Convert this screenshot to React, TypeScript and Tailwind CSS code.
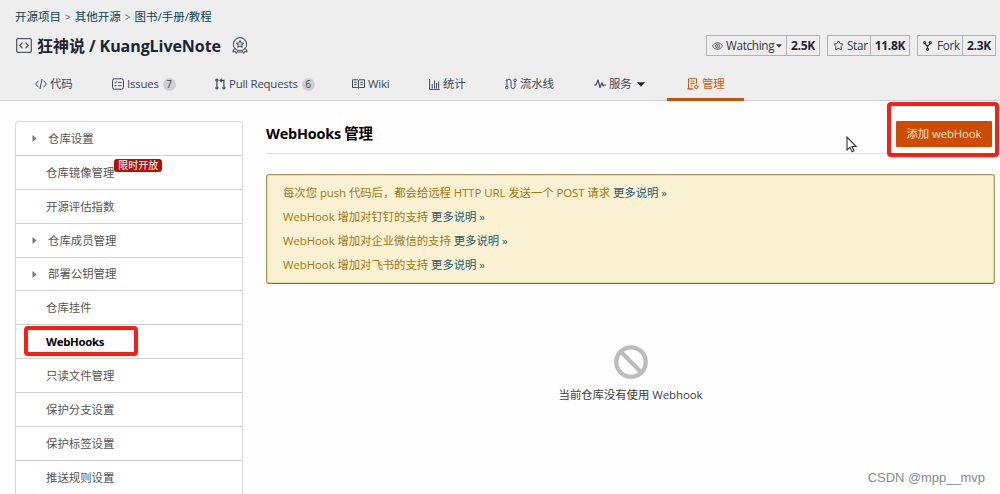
import type { ReactNode } from 'react';
import { Ban, Star } from 'lucide-react';

type Tab = {
  label: string;
  icon: ReactNode;
  width: string;
  badge?: string;
  caret?: boolean;
  active?: boolean;
};

const CodeIcon = () => (
  <svg width="12" height="12" viewBox="0 0 12 12" fill="none" stroke="currentColor" strokeWidth="1">
    <path d="M3.6 2.6L.6 6l3 3.4M8.4 2.6l3 3.4-3 3.4M7 1L5 11" />
  </svg>
);

const IssuesIcon = () => (
  <svg width="12" height="12" viewBox="0 0 12 12" fill="none" stroke="currentColor" strokeWidth="1">
    <rect x=".5" y=".8" width="11" height="10.4" rx="2" />
    <path d="M2.5 4.3l.9.8 1.3-1.6M6.2 4.4h3.4M2.5 7.7h2M6.2 7.7h3.4" />
  </svg>
);

const PullIcon = () => (
  <svg width="11" height="12" viewBox="0 0 11 12" fill="none" stroke="currentColor" strokeWidth="1.2">
    <circle cx="1.9" cy="2.2" r="1" />
    <circle cx="1.9" cy="9.8" r="1" />
    <circle cx="8.9" cy="9.8" r="1" />
    <path d="M1.9 3.4v5.2M8.9 8.6V2.4H5M6.700.7L5 2.400l1.700 1.700" />
  </svg>
);

const WikiIcon = () => (
  <svg width="13" height="10" viewBox="0 0 13 10" fill="none" stroke="currentColor" strokeWidth="1">
    <path d="M.5 .8h5l1 .7 1-.7h5v7.7h-5l-1 .8-1-.8h-5zM6.5 1.5v7.6M2.2 3.3h2.5M2.2 5.7h2.5M8.3 3.3h2.5M8.3 5.7h2.5" />
  </svg>
);

const StatsIcon = () => (
  <svg width="11" height="11" viewBox="0 0 11 11" fill="none" stroke="currentColor" strokeWidth="1">
    <path d="M.6 0v10.4H11" />
    <path d="M3.2 9.5V5M5.6 9.5V1.5M7.6 9.5V4M9.7 9.5V2.5" />
  </svg>
);

const PipelineIcon = () => (
  <svg width="12" height="12" viewBox="0 0 12 12" fill="none" stroke="currentColor" strokeWidth="1">
    <circle cx="1.8" cy="9.6" r="1.3" />
    <circle cx="10.1" cy="2.3" r="1.3" />
    <path d="M2 8.3V3.2a2 2 0 0 1 4 0v5.3a2 2 0 0 0 4 0V3.6M.7 3L2 1.2" />
  </svg>
);

const PulseIcon = () => (
  <svg width="12" height="10" viewBox="0 0 12 10" fill="none" stroke="currentColor" strokeWidth="1.2" strokeLinejoin="round">
    <path d="M0 6h2L4 1l2 7.5 1.8-4.7L9.3 7l.7-1h2" />
  </svg>
);

const ManageIcon = () => (
  <svg width="12" height="12" viewBox="0 0 12 12" fill="none" stroke="currentColor" strokeWidth="1">
    <path d="M9.5 5.5V.7h-8v10.2h5M.2 10.9h5M3.4 3.2h4.2M3.4 5.5h4.2M3.4 7.8h2" />
    <circle cx="9.3" cy="8.9" r="1.6" />
    <path d="M9.3 6.4v1M9.3 10.4v1M6.9 8.9h.8M10.9 8.9h.9" />
  </svg>
);

const RepoIcon = () => (
  <svg width="16" height="15" viewBox="0 0 16 15" fill="none" stroke="#565c66" strokeWidth="1.3">
    <rect x=".7" y=".7" width="14.6" height="13.6" rx="1" />
    <path d="M6.4 4.8L3.7 7.5l2.7 2.7M9.6 4.8l2.7 2.7-2.7 2.7" />
  </svg>
);

const MedalIcon = () => (
  <svg width="16" height="17" viewBox="0 0 16 17" fill="none" stroke="#565c66" strokeWidth="1.1" strokeLinejoin="round">
    <circle cx="8" cy="7.2" r="6.6" />
    <path d="M8 3.7l1.1 2.2 2.4.3-1.8 1.7.5 2.4L8 9.1l-2.2 1.200.5-2.400L4.500 6.200l2.400-.3z" />
    <path d="M2.600 11.200L.8 14.600l2.400-.1 1.200 1.800 1.700-2.600M13.400 11.200l1.800 3.400-2.400-.1-1.200 1.800-1.700-2.600M6.200 15.200h3.600" />
  </svg>
);

const EyeIcon = () => (
  <svg width="11" height="8" viewBox="0 0 11 8" fill="none" stroke="#4b4f58" strokeWidth=".9">
    <path d="M.5 4C1.8 1.8 3.6.7 5.5.7S9.2 1.8 10.5 4C9.2 6.2 7.4 7.3 5.5 7.3S1.8 6.2.5 4z" />
    <circle cx="5.5" cy="4" r="2" />
    <circle cx="5.5" cy="4" r=".5" />
  </svg>
);

const ForkIcon = () => (
  <svg width="9" height="10" viewBox="0 0 9 10" fill="none" stroke="#30343c" strokeWidth="1.2">
    <circle cx="1.7" cy="1.7" r="1" />
    <circle cx="7.3" cy="1.7" r="1" />
    <circle cx="4.5" cy="8.3" r="1" />
    <path d="M1.9 2.7l2.6 2.8 2.6-2.8M4.5 5.5v1.8" />
  </svg>
);

const Caret = ({ className }: { className: string }) => (
  <svg className={className} viewBox="0 0 8 5" fill="currentColor">
    <path d="M0 .3h8L4 4.8z" />
  </svg>
);

const tabs: Tab[] = [
  { label: '代码', icon: <CodeIcon />, width: 'w-[77px]' },
  { label: 'Issues', icon: <IssuesIcon />, width: 'w-[103px]', badge: '7' },
  { label: 'Pull Requests', icon: <PullIcon />, width: 'w-[137px]', badge: '6' },
  { label: 'Wiki', icon: <WikiIcon />, width: 'w-[77px]' },
  { label: '统计', icon: <StatsIcon />, width: 'w-[76px]' },
  { label: '流水线', icon: <PipelineIcon />, width: 'w-[89px]' },
  { label: '服务', icon: <PulseIcon />, width: 'w-[93px]', caret: true },
  { label: '管理', icon: <ManageIcon />, width: 'w-[77px]', active: true },
];

const menu = [
  { label: '仓库设置', expandable: true },
  { label: '仓库镜像管理', tag: '限时开放' },
  { label: '开源评估指数' },
  { label: '仓库成员管理', expandable: true },
  { label: '部署公钥管理', expandable: true },
  { label: '仓库挂件' },
  { label: 'WebHooks', active: true },
  { label: '只读文件管理' },
  { label: '保护分支设置' },
  { label: '保护标签设置' },
  { label: '推送规则设置' },
];

const notices = [
  '每次您 push 代码后，都会给远程 HTTP URL 发送一个 POST 请求',
  'WebHook 增加对钉钉的支持',
  'WebHook 增加对企业微信的支持',
  'WebHook 增加对飞书的支持',
];

function CountButton({ icon, label, count, width, countWidth, caret }: {
  icon: ReactNode;
  label: string;
  count: string;
  width: string;
  countWidth: string;
  caret?: boolean;
}) {
  return (
    <div className={`flex h-[21px] border border-[#b3b3b3] text-[12px] text-[#31363f] ${width}`}>
      <div className="flex flex-1 items-center pl-[5px]">
        <span className="flex w-[14px] shrink-0">{icon}</span>
        <span className="text-[11.7px] tracking-[-0.3px]">{label}</span>
        {caret && <Caret className="ml-[2px] h-[4px] w-[6px] shrink-0" />}
      </div>
      <div className={`flex shrink-0 items-center justify-center border-l border-[#b3b3b3] font-bold tracking-[-0.3px] text-[#1b2433] ${countWidth}`}>
        {count}
      </div>
    </div>
  );
}

export default function App() {
  return (
    <div className="relative h-[494px] w-[1000px] overflow-hidden bg-[#fefefe] font-['Open_Sans','Noto_Sans_CJK_SC',sans-serif] text-[11.4px] whitespace-nowrap text-[#333]">
      <header className="flex h-[101px] flex-col border-b border-[#cfcfcf] bg-[#eee]">
        <div className="flex h-[18px] items-center gap-[4px] pt-[16px] pl-[15px] text-[11.5px] text-[#0b4257]">
          <span>开源项目</span>
          <span className="text-[10px] text-[#666]">&gt;</span>
          <span>其他开源</span>
          <span className="text-[10px] text-[#666]">&gt;</span>
          <span>图书/手册/教程</span>
        </div>

        <div className="mt-[14px] flex h-[27px] items-center pr-[4px] pl-[16px]">
          <RepoIcon />
          <h1 className="ml-[5px] text-[16px] font-bold tracking-[-0.06px] text-[#1b2433]">狂神说 / KuangLiveNote</h1>
          <span className="ml-[11px]"><MedalIcon /></span>
          <div className="ml-auto flex gap-[7px]">
            <CountButton icon={<EyeIcon />} label="Watching" count="2.5K" width="w-[114px]" countWidth="w-[33px]" caret />
            <CountButton icon={<Star size={11} strokeWidth={2} />} label="Star" count="11.8K" width="w-[83px]" countWidth="w-[39px]" />
            <CountButton icon={<ForkIcon />} label="Fork" count="2.3K" width="w-[79px]" countWidth="w-[33px]" />
          </div>
        </div>

        <nav className="mt-[8px] -mb-px flex h-[34px] pl-[15px]">
          {tabs.map(tab => (
            <a
              key={tab.label}
              className={`flex h-full items-center gap-[3px] border-b-[3px] pt-[3px] pl-5 ${tab.width} ${tab.active ? 'border-[#c35309] text-[#ce5c10]' : 'border-transparent text-[#40485b]'}`}
            >
              {tab.icon}
              <span className="tracking-[-0.2px]">{tab.label}</span>
              {tab.badge && (
                <span className="ml-[1px] flex size-[13px] items-center justify-center rounded-full bg-[#cfcfd2] text-[10px]">{tab.badge}</span>
              )}
              {tab.caret && <Caret className="ml-[3px] h-[5px] w-[8px] text-[#222]" />}
            </a>
          ))}
        </nav>
      </header>

      <div className="flex">
        <aside className="mt-[20px] ml-[15px] w-[228px] rounded-t-[3px] border border-[#d9d9d9] bg-white">
          {menu.map(item => (
            <div key={item.label} className="flex h-[33.9px] items-center border-b border-[#d2d2d2] pl-[16px] text-[#555]">
              <span className={item.expandable ? 'w-[16px]' : 'w-[14px]'}>
                {item.expandable && (
                  <svg width="5" height="7" viewBox="0 0 5 7" fill="#777">
                    <path d="M.5 0l4 3.5-4 3.5z" />
                  </svg>
                )}
              </span>
              <span className={item.active ? 'font-bold tracking-[-0.3px] text-black' : ''}>{item.label}</span>
              {item.tag && (
                <span className="mb-[14px] flex h-[13px] w-[48px] items-center justify-center rounded-[3px] bg-[#b11207] text-[10px] text-white">
                  {item.tag}
                </span>
              )}
            </div>
          ))}
        </aside>

        <main className="ml-[23px] w-[729px]">
          <div className="flex h-[53px] items-center border-b border-[#e0e2e4] pt-[13px] pr-[3px]">
            <h2 className="text-[14.4px] font-bold tracking-[-0.2px] text-black">WebHooks 管理</h2>
            <button className="ml-auto h-[26px] w-[96px] rounded-[1px] bg-[#cf4b00] text-[11.4px] tracking-[-0.1px] text-[#fbe6c4]">添加 webHook</button>
          </div>

          <div className="mt-[20px] flex h-[110px] flex-col rounded-[3px] border border-[#ae9750] border-b-[#80702f] bg-[#faf0d2] pt-[6px] pl-[16px] text-[#a57811] shadow-[inset_0_0_0_1px_#e6d9a6]">
            {notices.map(text => (
              <p key={text} className="flex h-[23.8px] items-center tracking-[-0.06px]">
                {text}
                <a className="ml-[3px] text-[#1d5c70]">更多说明 »</a>
              </p>
            ))}
          </div>

          <div className="mt-[59px] flex flex-col items-center text-[#404040]">
            <Ban size={38} strokeWidth={2.9} color="#bcbcbc" absoluteStrokeWidth={false} className="scale-[.93]" />
            <p className="mt-[5px] tracking-[-0.05px]">当前仓库没有使用 Webhook</p>
          </div>
        </main>
      </div>

      {/* highlight frames */}
      <div className="absolute top-[102px] left-[887px] h-[55px] w-[112px] rounded-[4px] border-4 border-[#fb1e14]" />
      <div className="absolute top-[326px] left-[24px] h-[30px] w-[114px] rounded-[4px] border-4 border-[#fb1e14]" />

      {/* mouse pointer */}
      <svg className="absolute top-[136px] left-[846px]" width="12" height="17" viewBox="0 0 12 17" fill="#fff" stroke="#333" strokeWidth="1.1">
        <path d="M1 1v13l3-2.7 2 4.4 2-1-2-4.2h4.2z" />
      </svg>

      <div className="absolute right-[15px] bottom-[7px] font-['Liberation_Sans',sans-serif] text-[13px] leading-[18px] tracking-[-0.05px] text-[#8a8a8a]">
        CSDN @mpp__mvp
      </div>
    </div>
  );
}
